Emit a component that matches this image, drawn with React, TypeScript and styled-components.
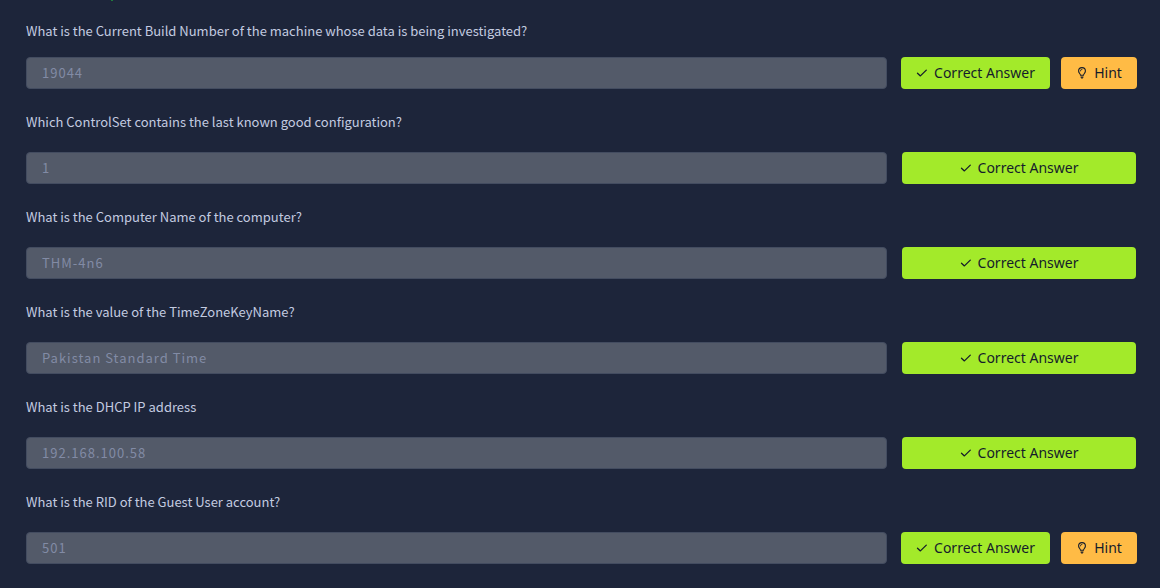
import React from "react";
import styled, { createGlobalStyle } from "styled-components";

const GlobalStyle = createGlobalStyle`
  *, *::before, *::after { box-sizing: border-box; }
  body {
    margin: 0;
    background: #1d253a;
    color: #c3cbe0;
    font-family: "Source Sans Pro", "Noto Sans CJK JP", sans-serif;
    font-size: 13px;
    line-height: 24px;
  }
`;

const Page = styled.main`
  padding: 0 23px 24px 26px;
`;

const HeadingTail = styled.div`
  width: 2px;
  height: 1px;
  margin: 0 0 18px 85px;
  background: #1f7a3c;
`;

const QuestionList = styled.form`
  display: flex;
  flex-direction: column;
  gap: 21px;
`;

const Question = styled.div<{ $gap: number }>`
  display: flex;
  flex-direction: column;
  gap: ${(p) => p.$gap}px;
`;

const Prompt = styled.label`
  display: block;
`;

const AnswerRow = styled.div`
  display: grid;
  grid-template-columns: minmax(0, 1fr) 236px;
  column-gap: 14px;
`;

const AnswerInput = styled.input`
  width: 100%;
  height: 32px;
  padding: 0 15px 1px;
  border: 1px solid #434c60;
  border-radius: 4px;
  background: #535a69;
  color: #828ba5;
  font: inherit;
  letter-spacing: 1px;

  &::placeholder {
    color: #828ba5;
    opacity: 1;
  }
`;

const Actions = styled.div<{ $inset: number }>`
  display: flex;
  gap: 11px;
  padding: 0 ${(p) => p.$inset}px;
`;

const Button = styled.button<{ $tone: "correct" | "hint" }>`
  display: flex;
  flex: ${(p) => (p.$tone === "correct" ? "1 1 auto" : "0 0 76px")};
  align-items: center;
  justify-content: center;
  gap: 6px;
  height: 32px;
  padding: 0;
  border: 0;
  border-radius: 4px;
  background: ${(p) => (p.$tone === "correct" ? "#a3ea2a" : "#ffbb45")};
  color: #151c2b;
  font-family: "Noto Sans", sans-serif;
  font-size: 14px;
  line-height: 24px;
`;

const Icon = styled.svg`
  flex: none;
  width: 12px;
  height: 12px;
  fill: none;
  stroke: currentColor;
  stroke-linecap: round;
  stroke-linejoin: round;
`;

const CheckIcon = () => (
  <Icon viewBox="0 0 12 12" strokeWidth="1.3" aria-hidden="true">
    <path d="M1.500 6.200 4.400 8.900 10.300 3.100" />
  </Icon>
);

const BulbIcon = () => (
  <Icon viewBox="0 0 12 12" strokeWidth="1.1" aria-hidden="true">
    <path d="M4.500 8.300C4.500 6.800 2.600 6.100 2.600 4A3.400 3.400 0 0 1 9.400 4C9.400 6.100 7.500 6.800 7.500 8.300Z" />
    <path d="M4.300 4A1.700 1.700 0 0 1 6 2.300" strokeWidth="0.8" />
    <path d="M4.900 10H7.100M5.600 11H6.400" />
  </Icon>
);

const questions = [
  { id: "build", prompt: "What is the Current Build Number of the machine whose data is being investigated?", answer: "19044", hint: true, gap: 14 },
  { id: "controlset", prompt: "Which ControlSet contains the last known good configuration?", answer: "1", hint: false, gap: 18 },
  { id: "computer", prompt: "What is the Computer Name of the computer?", answer: "THM-4n6", hint: false, gap: 18 },
  { id: "timezone", prompt: "What is the value of the TimeZoneKeyName?", answer: "Pakistan Standard Time", hint: false, gap: 18 },
  { id: "dhcp", prompt: "What is the DHCP IP address", answer: "192.168.100.58", hint: false, gap: 18 },
  { id: "rid", prompt: "What is the RID of the Guest User account?", answer: "501", hint: true, gap: 18 },
];

export default function App() {
  return (
    <>
      <GlobalStyle />
      <Page>
        <HeadingTail />
        <QuestionList>
          {questions.map((q) => (
            <Question key={q.id} $gap={q.gap}>
              <Prompt htmlFor={q.id}>{q.prompt}</Prompt>
              <AnswerRow>
                <AnswerInput id={q.id} type="text" placeholder={q.answer} readOnly />
                <Actions $inset={q.hint ? 0 : 1}>
                  <Button type="button" $tone="correct">
                    <CheckIcon />
                    Correct Answer
                  </Button>
                  {q.hint && (
                    <Button type="button" $tone="hint">
                      <BulbIcon />
                      Hint
                    </Button>
                  )}
                </Actions>
              </AnswerRow>
            </Question>
          ))}
        </QuestionList>
      </Page>
    </>
  );
}
